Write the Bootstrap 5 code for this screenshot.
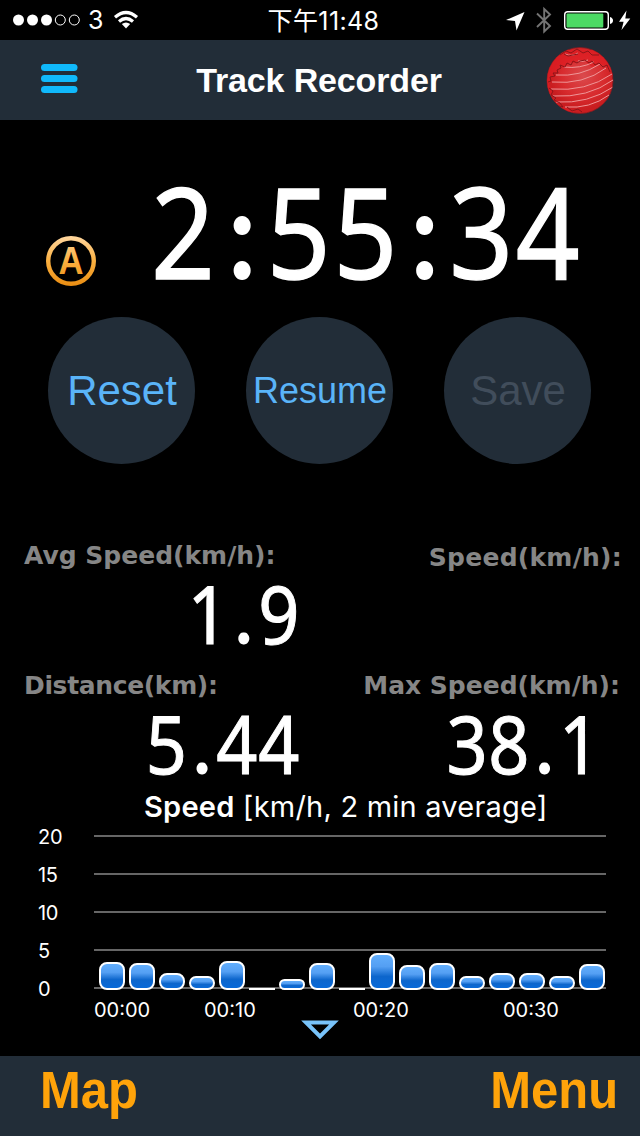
<!DOCTYPE html>
<html lang="en">
<head>
<meta charset="utf-8">
<meta name="viewport" content="width=device-width, initial-scale=1">
<title>Track Recorder</title>
<link href="https://cdn.jsdelivr.net/npm/bootstrap@5.3.0/dist/css/bootstrap.min.css" rel="stylesheet">
<style>
  body { background:#000; color:#fff; font-family:"Liberation Sans",sans-serif; }
  .screen { width:640px; height:1136px; overflow:hidden; }
  .status { height:40px; font-family:Inter,"Noto Sans CJK TC",sans-serif; font-size:25px; line-height:42px; padding:0 9px 0 13px; }
  .status .side { width:200px; }
  .clock { font-size:25px; white-space:nowrap; letter-spacing:.4px; padding-left:3px; }
  .signal { width:67px; height:12px; }
  .bar-panel { background:#222d38; height:80px; }
  .topbar h1 { font-size:34px; line-height:80px; font-weight:bold; letter-spacing:-.15px; margin-left:-2px!important; }
  .timer-row { height:197px; padding-left:46px; }
  .auto-badge { width:50px; height:50px; margin-top:116px; }
  .num { font-family:"Noto Sans","Open Sans",sans-serif; white-space:nowrap; }
  .num i { display:inline-block; font-family:Lato,sans-serif; font-style:normal; font-weight:bold; text-align:center; letter-spacing:0; line-height:1; -webkit-text-stroke:0; }
  .timer { font-size:127px; line-height:130px; margin:45px 0 0 55px; transform:scaleX(.88); transform-origin:left; letter-spacing:3px; -webkit-text-stroke:1.4px #fff; }
  .timer i { width:56px; }
  .controls { padding-left:48px; gap:51px; }
  .round-btn { width:147px; height:147px; border-radius:50%; background:#222d38; border:0; color:#5ab4f8; font-size:42px; padding:0 0 0 1px; line-height:147px; }
  .round-btn:disabled { background:#222d38; color:#414d5b; opacity:1; }
  .round-btn.fit { font-size:36px; }
  .stats { padding:77px 20px 0 24px; height:319px; }
  .stat { height:130px; }
  .stat-label { font:bold 25px/30px "DejaVu Sans",sans-serif; color:#868686; white-space:nowrap; }
  .stat-value { font-size:80px; line-height:80px; margin-top:2px; transform:scaleX(.9); transform-origin:right; text-align:right; letter-spacing:.7px; -webkit-text-stroke:1px #fff; }
  .stat-value i { width:32px; }
  .left-stat { width:276px; }
  .chart-title { font:29px/22px Inter,sans-serif; letter-spacing:.22px; padding-top:13px; height:34px; white-space:nowrap; padding-left:144px; }
  .chart { font-family:Inter,sans-serif; font-size:20px; padding:0 34px 0 38px; }
  .tick { height:38px; line-height:40px; }
  .tick span { width:56px; letter-spacing:-.3px; padding-top:1px; }
  .tick hr { margin:0; border:0; height:2px; background:#666; opacity:1; }
  .bars { left:99px; bottom:17px; gap:4px; }
  .bars div { width:26px; border:2px solid #fff; border-radius:8px; background:linear-gradient(#62aefc 0,#549ff3 35%,#0d66cc 65%,#0869d8 100%); }
  .bars div.flat { border-width:1px; border-radius:0; height:2px; }
  .times { font:20px/20px Inter,sans-serif; margin-top:-7px; height:20px; padding-left:94px; }
  .footer-btn { font-size:51px; line-height:70px; font-weight:bold; color:#ffa30a; text-decoration:none; transform:scaleX(.96); transform-origin:left; }
  .footer-btn.end { transform-origin:right; }
</style>
</head>
<body>
<div class="screen d-flex flex-column">
  <div class="status d-flex justify-content-between">
    <div class="side d-flex align-items-center">
      <svg class="signal" viewBox="0 0 67 12"><g fill="#fff"><circle cx="5.5" cy="6" r="5.5"/><circle cx="19.5" cy="6" r="5.5"/><circle cx="33.5" cy="6" r="5.5"/></g><g fill="none" stroke="#fff"><circle cx="47.3" cy="6" r="5"/><circle cx="61.3" cy="6" r="5"/></g></svg>
      <span style="margin-left:8px">3</span>
      <svg class="ms-2" width="30" height="20" viewBox="-1 0 30 20"><g fill="none" stroke="#fff" stroke-width="3.2"><path d="M3 7.2Q14-2.2 25 7.2"/><path d="M7 11.5Q14 5.5 21 11.5"/></g><path d="M9.8 14Q14 10.8 18.2 14L14 18.5Z" fill="#fff"/></svg>
    </div>
    <div class="clock">下午11:48</div>
    <div class="side d-flex align-items-center justify-content-end">
      <svg width="126" height="30" viewBox="505 5 126 30"><path d="M506 20L524.500 12L516.500 30.500L515 21Z" fill="#fff"/><path d="M537 13.500L550 26L544.200 31.500V9L550 14.500L537 27" fill="none" stroke="#747474" stroke-width="1.900"/><rect x="564.700" y="11.700" width="43.600" height="17.600" rx="3" fill="none" stroke="#fff" stroke-width="1.400"/><rect x="566.500" y="13.500" width="36.800" height="14" rx="1" fill="#4cd964"/><path d="M610 17Q613 18 613 20.500T610 24Z" fill="#fff"/><path d="M626.500 10.500L619 21.800H623.600L621.500 30L630.300 18.500H625.300Z" fill="#fff"/></svg>
    </div>
  </div>
  <header class="topbar bar-panel d-flex justify-content-between">
    <svg class="flex-shrink-0" width="100" height="80"><g fill="#10b9fb"><rect x="41" y="24" width="36.500" height="7" rx="3.500"/><rect x="41" y="35" width="36.500" height="7" rx="3.500"/><rect x="41" y="46" width="36.500" height="7" rx="3.500"/></g></svg>
    <h1 class="m-0">Track Recorder</h1>
    <svg class="flex-shrink-0" width="100" height="80" viewBox="540 40 100 80">
      <defs><radialGradient id="globe" cx=".55" cy=".43"><stop offset="0" stop-color="#da4a4d"/><stop offset=".65" stop-color="#d82b2e"/><stop offset="1" stop-color="#c91d20"/></radialGradient><clipPath id="disc"><circle cx="580" cy="80.500" r="33"/></clipPath></defs>
      <circle cx="580" cy="80.500" r="33" fill="url(#globe)" stroke="#861b20" stroke-width=".8"/>
      <g clip-path="url(#disc)">
        <path d="M546 50H616V82L606 66L599 64L592 67L586 62L579 60L574 63L570 62L564 67L560 66L556 73L552 77L549 84L552 90L552 97L558 104L566 108L575 112L560 115L545 100Z" fill="#df1d22" fill-opacity=".7"/>
        <g fill="none" stroke="#ee9698" stroke-width="1"><path d="M578 61Q584 62 588 60"/><path d="M564 67Q580 69 594 62"/><path d="M556 75Q580 77 600 64"/><path d="M552 82Q583 85 606 68"/><path d="M551 89Q586 92 612 74"/><path d="M553 96Q588 98 613 80"/><path d="M556 102Q588 104 613 87"/><path d="M565 107Q590 109 609 95"/><path d="M565 54Q572 57 578 53"/></g>
        <g fill="none" stroke="#8d1519" stroke-width="1"><path d="M548 82L551 81L550 77L555 76L553 73L558 73L557 70L561 68L560 65L565 67L567 63L571 65L573 61L577 63L580 61L585 60L589 63L592 61L595 65L599 63L603 67L607 65L610 72"/><path d="M549 88L553 91L551 95L556 98L554 100L560 103L563 107L559 106M567 107L572 111L578 109L582 112M560 55L566 51L571 53L577 49L583 53L588 51L592 55L599 55M564 54L568 56L578 54"/></g>
      </g>
    </svg>
  </header>
  <div class="timer-row d-flex align-items-start">
    <svg class="auto-badge flex-shrink-0" viewBox="0 0 50 50"><defs><linearGradient id="amber" gradientUnits="userSpaceOnUse" x1="0" y1="0" x2="0" y2="50"><stop offset="0" stop-color="#ffd7a0"/><stop offset=".5" stop-color="#fbb040"/><stop offset="1" stop-color="#e98d12"/></linearGradient></defs><circle cx="25" cy="25" r="22.800" fill="none" stroke="url(#amber)" stroke-width="4.400"/><text x="25" y="38" text-anchor="middle" font-family="Liberation Sans,sans-serif" font-weight="bold" font-size="38" textLength="25" lengthAdjust="spacingAndGlyphs" fill="url(#amber)">A</text></svg>
    <div class="timer num">2<i>:</i>55<i>:</i>34</div>
  </div>
  <div class="controls d-flex">
    <button class="round-btn">Reset</button>
    <button class="round-btn fit">Resume</button>
    <button class="round-btn" disabled>Save</button>
  </div>
  <div class="stats">
    <div class="d-flex justify-content-between">
      <div class="stat left-stat"><div class="stat-label">Avg Speed(km/h):</div><div class="stat-value num">1<i>.</i>9</div></div>
      <div class="stat"><div class="stat-label text-end" style="padding-top:2px;margin-right:-2px;letter-spacing:.25px">Speed(km/h):</div></div>
    </div>
    <div class="d-flex justify-content-between">
      <div class="stat left-stat"><div class="stat-label" style="letter-spacing:-.35px">Distance(km):</div><div class="stat-value num">5<i>.</i>44</div></div>
      <div class="stat"><div class="stat-label text-end">Max Speed(km/h):</div><div class="stat-value num" style="margin-right:19px">38<i>.</i>1</div></div>
    </div>
  </div>
  <div class="chart-title"><b class="fw-semibold">Speed</b> [km/h, 2 min average]</div>
  <div class="chart position-relative">
    <div class="tick d-flex align-items-center"><span>20</span><hr class="flex-grow-1"></div>
    <div class="tick d-flex align-items-center"><span>15</span><hr class="flex-grow-1"></div>
    <div class="tick d-flex align-items-center"><span>10</span><hr class="flex-grow-1"></div>
    <div class="tick d-flex align-items-center"><span>5</span><hr class="flex-grow-1"></div>
    <div class="tick d-flex align-items-center"><span>0</span><hr class="flex-grow-1"></div>
    <div class="bars position-absolute d-flex align-items-end">
      <div style="height:28px"></div><div style="height:27px"></div><div style="height:17px"></div><div style="height:14px"></div><div style="height:29px"></div><div class="flat"></div><div style="height:11px"></div><div style="height:27px"></div><div class="flat"></div><div style="height:37px"></div><div style="height:25px"></div><div style="height:27px"></div><div style="height:14px"></div><div style="height:17px"></div><div style="height:17px"></div><div style="height:14px"></div><div style="height:26px"></div>
    </div>
  </div>
  <div class="times d-flex"><span style="width:110px">00:00</span><span style="width:149px">00:10</span><span style="width:150px">00:20</span><span>00:30</span></div>
  <svg class="mx-auto flex-shrink-0" width="38" height="20" viewBox="0 0 38 20"><path d="M5 2.500H33L19 16.500Z" fill="none" stroke="#78c3fa" stroke-width="4"/></svg>
  <footer class="bar-panel mt-auto d-flex justify-content-between flex-shrink-0" style="padding:0 22px 0 40px"><a class="footer-btn" href="#">Map</a><a class="footer-btn end" href="#">Menu</a></footer>
</div>
<script src="https://cdn.jsdelivr.net/npm/bootstrap@5.3.0/dist/js/bootstrap.bundle.min.js"></script>
</body>
</html>
